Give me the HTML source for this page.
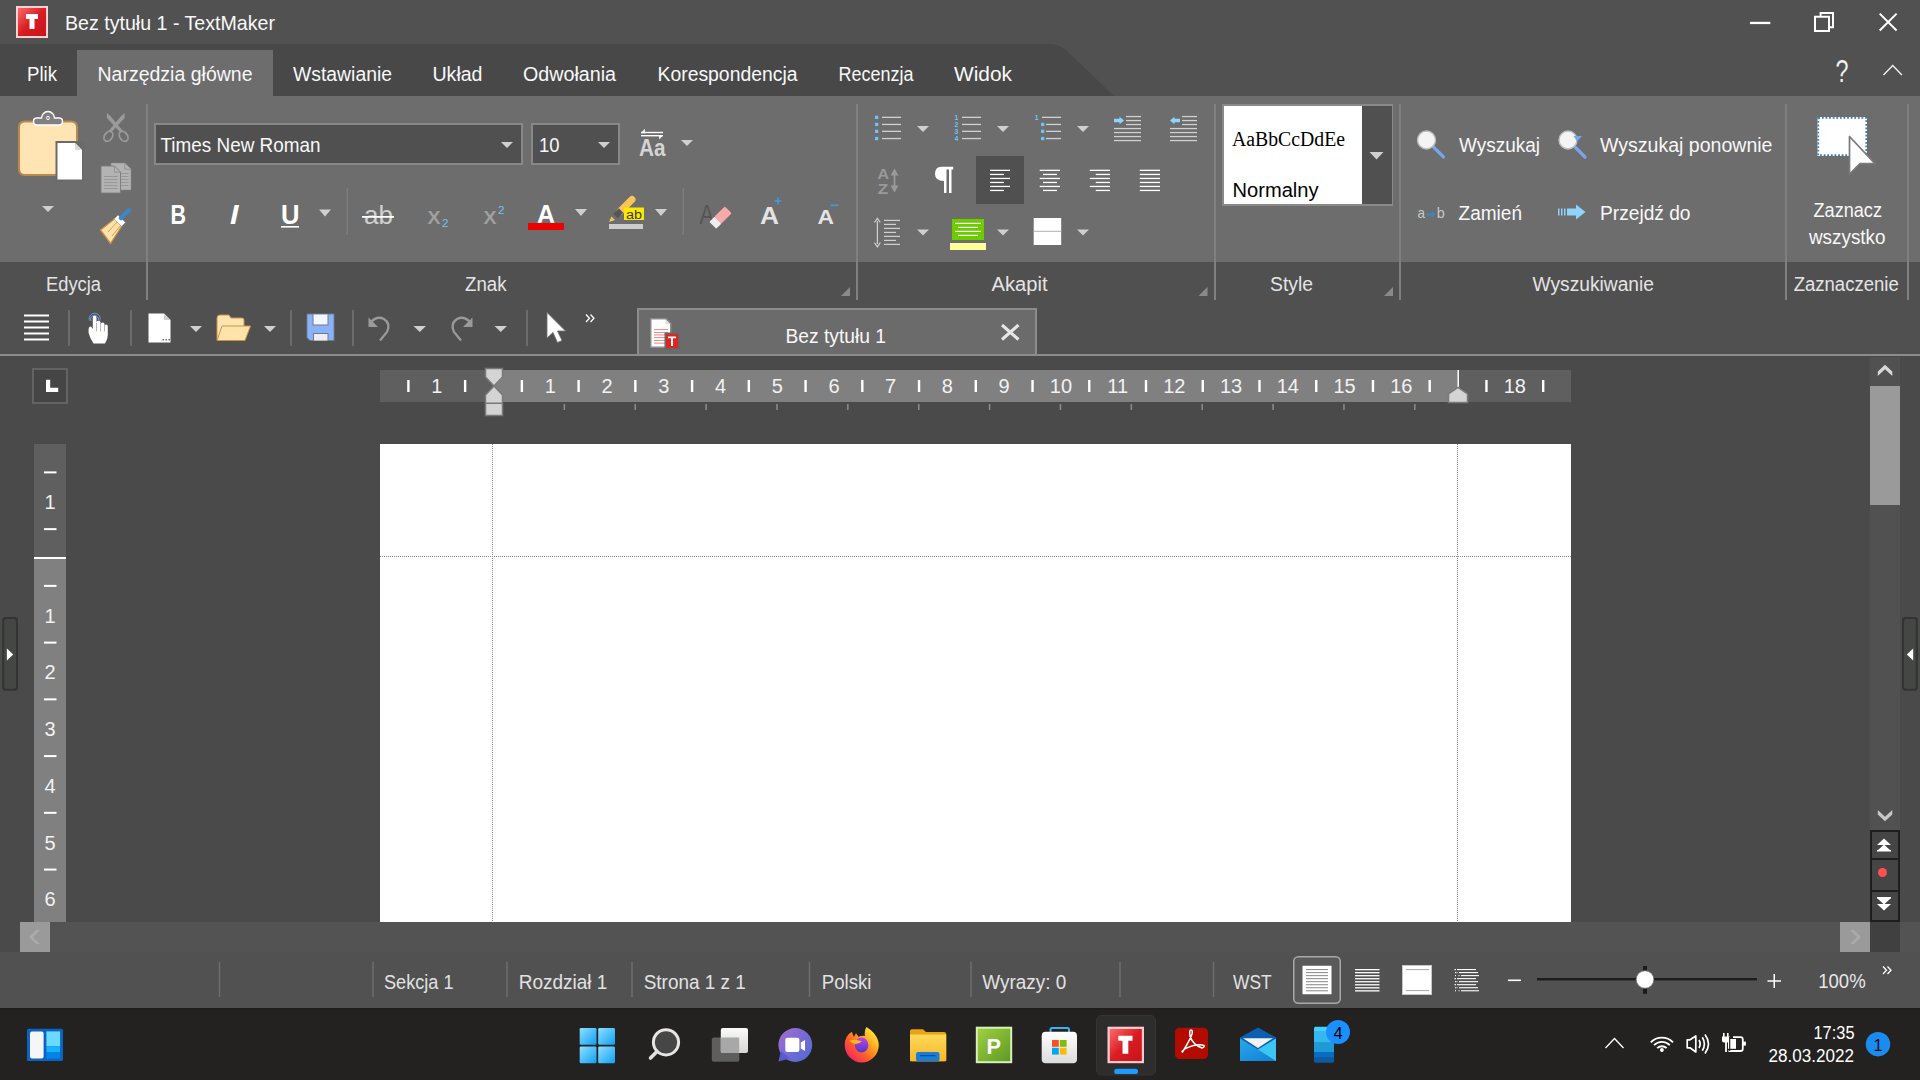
<!DOCTYPE html>
<html><head><meta charset="utf-8"><style>html,body{margin:0;padding:0;width:1920px;height:1080px;overflow:hidden;background:#4a4a4a}svg{display:block}</style></head><body><svg width="1920" height="1080" viewBox="0 0 1920 1080"><rect x="0" y="0" width="1920" height="44" fill="#515151" />
<rect x="0" y="44" width="1920" height="52" fill="#515151" />
<path d="M0 44H1050Q1060 44 1068 52L1114 96H0Z" fill="#484848" stroke="none" stroke-width="1" />
<rect x="77" y="50" width="196" height="46" fill="#6d6d6d" />
<rect x="0" y="96" width="1920" height="166" fill="#6d6d6d" />
<rect x="0" y="262" width="1920" height="93" fill="#505050" />
<rect x="0" y="356" width="1920" height="566" fill="#4a4a4a" />
<rect x="0" y="922" width="1920" height="30" fill="#535353" />
<rect x="0" y="952" width="1920" height="56" fill="#515151" />
<rect x="0" y="1008" width="1920" height="72" fill="#232220" />
<defs><linearGradient id="lg" x1="0" y1="0" x2="1" y2="1"><stop offset="0" stop-color="#ff6a6a"/><stop offset="0.5" stop-color="#d81c22"/><stop offset="1" stop-color="#c8141a"/></linearGradient></defs>
<rect x="16" y="6" width="32" height="32" fill="#ffd2d2" />
<rect x="18" y="8" width="28" height="28" fill="url(#lg)" />
<path d="M26 14H38V19H34.5V29H29.5V19H26Z" fill="#ffffff" stroke="none" stroke-width="1" />
<text x="65" y="30" font-size="21" fill="#f8f8f8" font-family='"Liberation Sans", sans-serif' font-weight="normal" font-style="normal" text-anchor="start" textLength="210" lengthAdjust="spacingAndGlyphs">Bez tytułu 1 - TextMaker</text>
<rect x="1750" y="21.8" width="20.3" height="2.3" fill="#ffffff" />
<path d="M1815 16.8H1829V30.9H1815Z" fill="none" stroke="#ffffff" stroke-width="2" />
<path d="M1820.6 16.8V12.9H1833V27.2H1829" fill="none" stroke="#ffffff" stroke-width="2" />
<path d="M1879.7 13.6L1896.6 30.5M1896.6 13.6L1879.7 30.5" fill="none" stroke="#ffffff" stroke-width="2" />
<text x="27" y="81" font-size="20" fill="#f8f8f8" font-family='"Liberation Sans", sans-serif' font-weight="normal" font-style="normal" text-anchor="start" textLength="30" lengthAdjust="spacingAndGlyphs">Plik</text>
<text x="97.5" y="81" font-size="20" fill="#f8f8f8" font-family='"Liberation Sans", sans-serif' font-weight="normal" font-style="normal" text-anchor="start" textLength="155" lengthAdjust="spacingAndGlyphs">Narzędzia główne</text>
<text x="293" y="81" font-size="20" fill="#f8f8f8" font-family='"Liberation Sans", sans-serif' font-weight="normal" font-style="normal" text-anchor="start" textLength="99" lengthAdjust="spacingAndGlyphs">Wstawianie</text>
<text x="432.5" y="81" font-size="20" fill="#f8f8f8" font-family='"Liberation Sans", sans-serif' font-weight="normal" font-style="normal" text-anchor="start" textLength="50" lengthAdjust="spacingAndGlyphs">Układ</text>
<text x="523" y="81" font-size="20" fill="#f8f8f8" font-family='"Liberation Sans", sans-serif' font-weight="normal" font-style="normal" text-anchor="start" textLength="93" lengthAdjust="spacingAndGlyphs">Odwołania</text>
<text x="657.5" y="81" font-size="20" fill="#f8f8f8" font-family='"Liberation Sans", sans-serif' font-weight="normal" font-style="normal" text-anchor="start" textLength="140" lengthAdjust="spacingAndGlyphs">Korespondencja</text>
<text x="838.5" y="81" font-size="20" fill="#f8f8f8" font-family='"Liberation Sans", sans-serif' font-weight="normal" font-style="normal" text-anchor="start" textLength="75" lengthAdjust="spacingAndGlyphs">Recenzja</text>
<text x="954" y="81" font-size="20" fill="#f8f8f8" font-family='"Liberation Sans", sans-serif' font-weight="normal" font-style="normal" text-anchor="start" textLength="58" lengthAdjust="spacingAndGlyphs">Widok</text>
<text x="1835.5" y="82" font-size="31" fill="#f0f0f0" font-family='"Liberation Sans", sans-serif' font-weight="normal" font-style="normal" text-anchor="start" textLength="13" lengthAdjust="spacingAndGlyphs">?</text>
<path d="M1883.5 75L1892.7 65.5L1901.9 75" fill="none" stroke="#f0f0f0" stroke-width="1.4" />
<rect x="146" y="104" width="2" height="196" fill="#808080" />
<rect x="856" y="104" width="2" height="196" fill="#808080" />
<rect x="1214" y="104" width="2" height="196" fill="#808080" />
<rect x="1399" y="104" width="2" height="196" fill="#808080" />
<rect x="1785" y="104" width="2" height="196" fill="#808080" />
<rect x="1907" y="104" width="2" height="196" fill="#808080" />
<text x="46" y="290.5" font-size="20" fill="#e4e4e4" font-family='"Liberation Sans", sans-serif' font-weight="normal" font-style="normal" text-anchor="start" textLength="55" lengthAdjust="spacingAndGlyphs">Edycja</text>
<text x="465" y="290.5" font-size="20" fill="#e4e4e4" font-family='"Liberation Sans", sans-serif' font-weight="normal" font-style="normal" text-anchor="start" textLength="41.5" lengthAdjust="spacingAndGlyphs">Znak</text>
<text x="991.5" y="290.5" font-size="20" fill="#e4e4e4" font-family='"Liberation Sans", sans-serif' font-weight="normal" font-style="normal" text-anchor="start" textLength="56" lengthAdjust="spacingAndGlyphs">Akapit</text>
<text x="1270" y="290.5" font-size="20" fill="#e4e4e4" font-family='"Liberation Sans", sans-serif' font-weight="normal" font-style="normal" text-anchor="start" textLength="43" lengthAdjust="spacingAndGlyphs">Style</text>
<text x="1532.5" y="290.5" font-size="20" fill="#e4e4e4" font-family='"Liberation Sans", sans-serif' font-weight="normal" font-style="normal" text-anchor="start" textLength="121.5" lengthAdjust="spacingAndGlyphs">Wyszukiwanie</text>
<text x="1793.7" y="290.5" font-size="20" fill="#e4e4e4" font-family='"Liberation Sans", sans-serif' font-weight="normal" font-style="normal" text-anchor="start" textLength="105" lengthAdjust="spacingAndGlyphs">Zaznaczenie</text>
<path d="M841 296H850V287Z" fill="#8a8a8a" stroke="none" stroke-width="1" />
<path d="M1198.5 296H1207.5V287Z" fill="#8a8a8a" stroke="none" stroke-width="1" />
<path d="M1384 296H1393V287Z" fill="#8a8a8a" stroke="none" stroke-width="1" />
<path d="M25 121.5H71Q77 121.5 77 127.5V169Q77 175 71 175H25Q19 175 19 169V127.5Q19 121.5 25 121.5Z" fill="#ffe5b3" stroke="#c0874a" stroke-width="2" />
<path d="M37 118H41.5A6.5 6.5 0 0 1 54.5 118H59Q62.5 118 62.5 121.5Q62.5 125 59 125H37Q33.5 125 33.5 121.5Q33.5 118 37 118Z" fill="#808080" stroke="#ffffff" stroke-width="1.4" />
<ellipse cx="48" cy="118" rx="1.4" ry="1.7" fill="none" stroke="#ffffff" stroke-width="0.9"/>
<rect x="55.5" y="141" width="28.5" height="40.5" fill="#6a6a6a" />
<path d="M57.5 143H75L82 150V179.5H57.5Z" fill="#ffffff" stroke="none" stroke-width="1" />
<path d="M75 143V150H82Z" fill="#d8d8d8" stroke="none" stroke-width="1" />
<path d="M42 206H54L48.0 212Z" fill="#cfcfcf"/>
<path d="M106.9 112.9L110.6 116.3L122.8 130.8L120.4 132.6L106.9 118Z" fill="#9a9a9a" stroke="none" stroke-width="1" />
<path d="M124.6 112.9V118L111.1 132.6L108.7 130.8L121 116.3Z" fill="#9a9a9a" stroke="none" stroke-width="1" />
<ellipse cx="108.4" cy="136.3" rx="3.8" ry="5.4" fill="none" stroke="#9a9a9a" stroke-width="1.8" transform="rotate(35 108.4 136.3)"/>
<ellipse cx="123.6" cy="136.3" rx="3.8" ry="5.4" fill="none" stroke="#9a9a9a" stroke-width="1.8" transform="rotate(-35 123.6 136.3)"/>
<path d="M111 163H125L131 169V190H111Z" fill="#b3b3b3" stroke="#8a8a8a" stroke-width="0.6" />
<path d="M124.8 163.3V169.2H130.7" fill="none" stroke="#8a8a8a" stroke-width="0.8" />
<path d="M101 166H114.5L120.5 172V193H101Z" fill="#b3b3b3" stroke="#7a7a7a" stroke-width="0.9" />
<path d="M114.5 166.3V172.2H120.2" fill="none" stroke="#8a8a8a" stroke-width="0.8" />
<rect x="104" y="176.0" width="13.5" height="1" fill="#979797" />
<rect x="104" y="179.0" width="13.5" height="1" fill="#979797" />
<rect x="104" y="182.0" width="13.5" height="1" fill="#979797" />
<rect x="104" y="185.0" width="13.5" height="1" fill="#979797" />
<rect x="104" y="188.0" width="13.5" height="1" fill="#979797" />
<rect x="121" y="173.0" width="7.5" height="1" fill="#979797" />
<rect x="121" y="176.0" width="7.5" height="1" fill="#979797" />
<rect x="121" y="179.0" width="7.5" height="1" fill="#979797" />
<rect x="121" y="182.0" width="7.5" height="1" fill="#979797" />
<rect x="121" y="185.0" width="7.5" height="1" fill="#979797" />
<path d="M100.5 230L115.5 218L122.5 225L110.5 243.5Z" fill="#ffe2a8" stroke="#c88b4a" stroke-width="1.3" />
<path d="M108 232L118 221M112 236L121 225" fill="none" stroke="#c88b4a" stroke-width="0.8" />
<path d="M114 219L118 215L125.5 222.5L121.5 226.5Z" fill="#ffffff" stroke="#8a8a8a" stroke-width="0.6" />
<path d="M121 218L129 210" fill="none" stroke="#3f84c4" stroke-width="4.5" stroke-linecap="round"/>
<rect x="154" y="123" width="369" height="42" fill="#888888" />
<rect x="156" y="125" width="365" height="38" fill="#505050" />
<text x="160.5" y="152.2" font-size="21" fill="#f8f8f8" font-family='"Liberation Sans", sans-serif' font-weight="normal" font-style="normal" text-anchor="start" textLength="160" lengthAdjust="spacingAndGlyphs">Times New Roman</text>
<path d="M501 142H513L507.0 148Z" fill="#cfcfcf"/>
<rect x="531" y="123" width="89" height="42" fill="#888888" />
<rect x="533" y="125" width="85" height="38" fill="#505050" />
<text x="539" y="152" font-size="21" fill="#f8f8f8" font-family='"Liberation Sans", sans-serif' font-weight="normal" font-style="normal" text-anchor="start" textLength="20.5" lengthAdjust="spacingAndGlyphs">10</text>
<path d="M598 142H610L604.0 148Z" fill="#cfcfcf"/>
<rect x="641" y="131.8" width="22" height="1.4" fill="#ffffff" />
<path d="M640.8 133.2L644.8 128.7V133.2Z" fill="#ffffff" stroke="none" stroke-width="1" />
<rect x="641" y="135" width="22" height="1.4" fill="#ffffff" />
<path d="M663.2 135L659.2 139.5V135Z" fill="#ffffff" stroke="none" stroke-width="1" />
<text x="639" y="155.8" font-size="24" fill="#d4d4d4" font-family='"Liberation Sans", sans-serif' font-weight="bold" font-style="normal" text-anchor="start" textLength="26.5" lengthAdjust="spacingAndGlyphs">Aa</text>
<path d="M681 140H693L687.0 146Z" fill="#cfcfcf"/>
<text x="170.5" y="224.4" font-size="28" fill="#ffffff" font-family='"Liberation Sans", sans-serif' font-weight="bold" font-style="normal" text-anchor="start" textLength="15.5" lengthAdjust="spacingAndGlyphs">B</text>
<text x="230" y="224.4" font-size="28" fill="#ffffff" font-family='"Liberation Sans", sans-serif' font-weight="bold" font-style="italic" text-anchor="start" textLength="8.5" lengthAdjust="spacingAndGlyphs">I</text>
<text x="281" y="224.4" font-size="27" fill="#ffffff" font-family='"Liberation Sans", sans-serif' font-weight="bold" font-style="normal" text-anchor="start" textLength="18.5" lengthAdjust="spacingAndGlyphs">U</text>
<rect x="281" y="226" width="18" height="1.6" fill="#ffffff" />
<path d="M319 209.5H331L325.0 216.5Z" fill="#cfcfcf"/>
<rect x="346.5" y="188" width="1.5" height="47" fill="#7c7c7c" />
<text x="364" y="224.4" font-size="26" fill="#d0d0d0" font-family='"Liberation Sans", sans-serif' font-weight="normal" font-style="normal" text-anchor="start" textLength="29" lengthAdjust="spacingAndGlyphs">ab</text>
<rect x="362" y="216" width="32" height="1.8" fill="#ffffff" />
<text x="427.5" y="224" font-size="19" fill="#a0a0a0" font-family='"Liberation Sans", sans-serif' font-weight="bold" font-style="normal" text-anchor="start" textLength="13" lengthAdjust="spacingAndGlyphs">X</text>
<text x="442" y="227" font-size="10" fill="#6ec3f5" font-family='"Liberation Sans", sans-serif' font-weight="normal" font-style="normal" text-anchor="start" textLength="6.5" lengthAdjust="spacingAndGlyphs">2</text>
<text x="483.5" y="224" font-size="19" fill="#a0a0a0" font-family='"Liberation Sans", sans-serif' font-weight="bold" font-style="normal" text-anchor="start" textLength="13" lengthAdjust="spacingAndGlyphs">X</text>
<text x="498" y="214" font-size="10" fill="#6ec3f5" font-family='"Liberation Sans", sans-serif' font-weight="normal" font-style="normal" text-anchor="start" textLength="6.5" lengthAdjust="spacingAndGlyphs">2</text>
<text x="537" y="223" font-size="25" fill="#ffffff" font-family='"Liberation Sans", sans-serif' font-weight="bold" font-style="normal" text-anchor="start" textLength="18" lengthAdjust="spacingAndGlyphs">A</text>
<rect x="528" y="223" width="36" height="7" fill="#ee0000" />
<path d="M575 209H587L581.0 216Z" fill="#cfcfcf"/>
<path d="M620 211.5L632 199.5" fill="none" stroke="#f8c55a" stroke-width="7" stroke-linecap="round"/>
<path d="M621 210.5L615.5 216" fill="none" stroke="#555555" stroke-width="6.2" />
<path d="M609 222L611.5 216.5L615 220Z" fill="#f8c55a" stroke="none" stroke-width="1" />
<rect x="624" y="207.5" width="20" height="12.5" fill="#ffe800" />
<text x="626" y="218.5" font-size="12.5" fill="#3a3a3a" font-family='"Liberation Sans", sans-serif' font-weight="normal" font-style="normal" text-anchor="start" textLength="16" lengthAdjust="spacingAndGlyphs">ab</text>
<rect x="609" y="224" width="34" height="5" fill="#cccccc" />
<path d="M655 209H667L661.0 216Z" fill="#cfcfcf"/>
<rect x="682.5" y="188" width="1.5" height="47" fill="#7c7c7c" />
<text x="699.5" y="224" font-size="27" fill="#555555" font-family='"Liberation Sans", sans-serif' font-weight="normal" font-style="normal" text-anchor="start" textLength="14.5" lengthAdjust="spacingAndGlyphs">A</text>
<g transform="rotate(-45 720.6 217.5)"><rect x="709.5" y="212.6" width="7.5" height="9.8" rx="1" fill="#eeeeee"/><rect x="716.5" y="212.6" width="15" height="9.8" rx="1.5" fill="#f7aaaa"/></g>
<text x="760" y="223.5" font-size="24" fill="#e4e4e4" font-family='"Liberation Sans", sans-serif' font-weight="bold" font-style="normal" text-anchor="start" textLength="19" lengthAdjust="spacingAndGlyphs">A</text>
<path d="M778 197.5V204.5M774.5 201H781.5" fill="none" stroke="#3f9be0" stroke-width="1.6" />
<text x="817.5" y="223.5" font-size="21" fill="#e4e4e4" font-family='"Liberation Sans", sans-serif' font-weight="bold" font-style="normal" text-anchor="start" textLength="16.5" lengthAdjust="spacingAndGlyphs">A</text>
<rect x="830.5" y="204.5" width="8" height="1.6" fill="#3f9be0" />
<rect x="875" y="115.7" width="3.3" height="3.3" fill="#6ec3f5" />
<rect x="882" y="116.7" width="19" height="1.3" fill="#d0d0d0" />
<rect x="875" y="122.80000000000001" width="3.3" height="3.3" fill="#6ec3f5" />
<rect x="882" y="123.80000000000001" width="19" height="1.3" fill="#d0d0d0" />
<rect x="875" y="129.70000000000002" width="3.3" height="3.3" fill="#6ec3f5" />
<rect x="882" y="130.70000000000002" width="19" height="1.3" fill="#d0d0d0" />
<rect x="875" y="136.9" width="3.3" height="3.3" fill="#6ec3f5" />
<rect x="882" y="137.9" width="19" height="1.3" fill="#d0d0d0" />
<path d="M917 126H929L923.0 132Z" fill="#cfcfcf"/>
<text x="956.4" y="120.0" font-size="7.5" fill="#6ec3f5" font-family='"Liberation Sans", sans-serif' font-weight="bold" font-style="normal" text-anchor="middle" textLength="3.8" lengthAdjust="spacingAndGlyphs">1</text>
<rect x="962" y="116.7" width="19" height="1.3" fill="#d0d0d0" />
<text x="956.4" y="127.10000000000001" font-size="7.5" fill="#6ec3f5" font-family='"Liberation Sans", sans-serif' font-weight="bold" font-style="normal" text-anchor="middle" textLength="3.8" lengthAdjust="spacingAndGlyphs">2</text>
<rect x="962" y="123.80000000000001" width="19" height="1.3" fill="#d0d0d0" />
<text x="956.4" y="134.0" font-size="7.5" fill="#6ec3f5" font-family='"Liberation Sans", sans-serif' font-weight="bold" font-style="normal" text-anchor="middle" textLength="3.8" lengthAdjust="spacingAndGlyphs">3</text>
<rect x="962" y="130.70000000000002" width="19" height="1.3" fill="#d0d0d0" />
<text x="956.4" y="141.2" font-size="7.5" fill="#6ec3f5" font-family='"Liberation Sans", sans-serif' font-weight="bold" font-style="normal" text-anchor="middle" textLength="3.8" lengthAdjust="spacingAndGlyphs">4</text>
<rect x="962" y="137.9" width="19" height="1.3" fill="#d0d0d0" />
<path d="M997 126H1009L1003.0 132Z" fill="#cfcfcf"/>
<text x="1036.6" y="120.0" font-size="7.5" fill="#6ec3f5" font-family='"Liberation Sans", sans-serif' font-weight="bold" font-style="normal" text-anchor="middle" textLength="3.8" lengthAdjust="spacingAndGlyphs">1</text>
<rect x="1042" y="116.7" width="19" height="1.3" fill="#d0d0d0" />
<rect x="1041" y="122.80000000000001" width="3.3" height="3.3" fill="#6ec3f5" />
<rect x="1046" y="123.80000000000001" width="15" height="1.3" fill="#d0d0d0" />
<rect x="1041" y="129.70000000000002" width="3.3" height="3.3" fill="#6ec3f5" />
<rect x="1046" y="130.70000000000002" width="15" height="1.3" fill="#d0d0d0" />
<rect x="1041" y="136.9" width="3.3" height="3.3" fill="#6ec3f5" />
<rect x="1046" y="137.9" width="15" height="1.3" fill="#d0d0d0" />
<path d="M1077 126H1089L1083.0 132Z" fill="#cfcfcf"/>
<rect x="1126" y="115.9" width="15" height="1.3" fill="#d0d0d0" />
<rect x="1182" y="115.9" width="15" height="1.3" fill="#d0d0d0" />
<rect x="1126" y="119.9" width="15" height="1.3" fill="#d0d0d0" />
<rect x="1182" y="119.9" width="15" height="1.3" fill="#d0d0d0" />
<rect x="1126" y="123.9" width="15" height="1.3" fill="#d0d0d0" />
<rect x="1182" y="123.9" width="15" height="1.3" fill="#d0d0d0" />
<rect x="1114" y="127.9" width="27" height="1.3" fill="#d0d0d0" />
<rect x="1170" y="127.9" width="27" height="1.3" fill="#d0d0d0" />
<rect x="1114" y="131.9" width="27" height="1.3" fill="#d0d0d0" />
<rect x="1170" y="131.9" width="27" height="1.3" fill="#d0d0d0" />
<rect x="1114" y="135.9" width="27" height="1.3" fill="#d0d0d0" />
<rect x="1170" y="135.9" width="27" height="1.3" fill="#d0d0d0" />
<rect x="1114" y="139.9" width="27" height="1.3" fill="#d0d0d0" />
<rect x="1170" y="139.9" width="27" height="1.3" fill="#d0d0d0" />
<path d="M1114 118.8H1119.5V116.8L1124 120.5L1119.5 124.2V122.2H1114Z" fill="#8ed4ff" stroke="none" stroke-width="1" />
<path d="M1180 118.8H1174.5V116.8L1170 120.5L1174.5 124.2V122.2H1180Z" fill="#8ed4ff" stroke="none" stroke-width="1" />
<text x="877.5" y="178.6" font-size="15" fill="#9a9a9a" font-family='"Liberation Sans", sans-serif' font-weight="bold" font-style="normal" text-anchor="start" textLength="11.5" lengthAdjust="spacingAndGlyphs">A</text>
<text x="877.8" y="193.7" font-size="14.5" fill="#9a9a9a" font-family='"Liberation Sans", sans-serif' font-weight="bold" font-style="normal" text-anchor="start" textLength="10.5" lengthAdjust="spacingAndGlyphs">Z</text>
<rect x="893.6" y="173" width="1.8" height="15" fill="#9a9a9a" />
<path d="M890.5 175.5L894.5 168.5L898.5 175.5Z" fill="#9a9a9a" stroke="none" stroke-width="1" />
<path d="M890.5 185.5L894.5 192.5L898.5 185.5Z" fill="#9a9a9a" stroke="none" stroke-width="1" />
<path d="M941.5 166.7H953.2V169.5H951.5V192.9H949V169.5H946.5V192.9H944V181Q935 181 935 174Q935 166.7 941.5 166.7Z" fill="#ffffff" stroke="none" stroke-width="1" />
<rect x="976" y="156" width="48" height="48" fill="#505050" />
<rect x="990" y="169.70000000000002" width="20" height="1.3" fill="#ffffff" />
<rect x="1039.7" y="169.70000000000002" width="20.3" height="1.3" fill="#ffffff" />
<rect x="1089.8" y="169.70000000000002" width="20.2" height="1.3" fill="#ffffff" />
<rect x="1139.8" y="169.70000000000002" width="20.2" height="1.3" fill="#ffffff" />
<rect x="990" y="173.8" width="14" height="1.3" fill="#ffffff" />
<rect x="1043" y="173.8" width="14" height="1.3" fill="#ffffff" />
<rect x="1095.8" y="173.8" width="14.2" height="1.3" fill="#ffffff" />
<rect x="1139.8" y="173.8" width="20.2" height="1.3" fill="#ffffff" />
<rect x="990" y="177.8" width="20" height="1.3" fill="#ffffff" />
<rect x="1039.7" y="177.8" width="20.3" height="1.3" fill="#ffffff" />
<rect x="1089.8" y="177.8" width="20.2" height="1.3" fill="#ffffff" />
<rect x="1139.8" y="177.8" width="20.2" height="1.3" fill="#ffffff" />
<rect x="990" y="181.8" width="14" height="1.3" fill="#ffffff" />
<rect x="1043" y="181.8" width="14" height="1.3" fill="#ffffff" />
<rect x="1095.8" y="181.8" width="14.2" height="1.3" fill="#ffffff" />
<rect x="1139.8" y="181.8" width="20.2" height="1.3" fill="#ffffff" />
<rect x="990" y="185.8" width="20" height="1.3" fill="#ffffff" />
<rect x="1039.7" y="185.8" width="20.3" height="1.3" fill="#ffffff" />
<rect x="1089.8" y="185.8" width="20.2" height="1.3" fill="#ffffff" />
<rect x="1139.8" y="185.8" width="20.2" height="1.3" fill="#ffffff" />
<rect x="990" y="189.8" width="14" height="1.3" fill="#ffffff" />
<rect x="1043" y="189.8" width="14" height="1.3" fill="#ffffff" />
<rect x="1095.8" y="189.8" width="14.2" height="1.3" fill="#ffffff" />
<rect x="1139.8" y="189.8" width="20.2" height="1.3" fill="#ffffff" />
<rect x="876.8" y="221" width="1.2" height="23" fill="#d0d0d0" />
<path d="M874.5 222.5L877.4 218.3L880.3 222.5M874.5 242.7L877.4 246.9L880.3 242.7" fill="none" stroke="#d0d0d0" stroke-width="1.2" />
<rect x="884" y="219.8" width="16" height="1.2" fill="#d0d0d0" />
<rect x="884" y="223.8" width="12" height="1.2" fill="#d0d0d0" />
<rect x="884" y="227.8" width="16" height="1.2" fill="#d0d0d0" />
<rect x="884" y="231.8" width="12" height="1.2" fill="#d0d0d0" />
<rect x="884" y="235.8" width="16" height="1.2" fill="#d0d0d0" />
<rect x="884" y="239.8" width="12" height="1.2" fill="#d0d0d0" />
<rect x="884" y="243.8" width="16" height="1.2" fill="#d0d0d0" />
<path d="M917 229.5H929L923.0 235.5Z" fill="#cfcfcf"/>
<rect x="952" y="219" width="32" height="21" fill="#6ccc00" />
<rect x="955" y="222.8" width="26" height="1.2" fill="#ffffff" />
<rect x="958" y="226.8" width="20" height="1.2" fill="#ffffff" />
<rect x="955" y="230.8" width="26" height="1.2" fill="#ffffff" />
<rect x="958" y="234.8" width="20" height="1.2" fill="#ffffff" />
<rect x="950" y="243" width="36" height="7" fill="#ffff99" />
<path d="M997 229.5H1009L1003.0 235.5Z" fill="#cfcfcf"/>
<rect x="1033.7" y="218" width="27.5" height="27" fill="#ffffff" />
<rect x="1033.7" y="230.8" width="27.5" height="1" fill="#b0b0b0" />
<path d="M1077 229.5H1089L1083.0 235.5Z" fill="#cfcfcf"/>
<rect x="1222" y="104" width="171" height="102" fill="#8a8a8a" />
<rect x="1224" y="106" width="168" height="98" fill="#505050" />
<rect x="1224" y="106" width="138" height="98" fill="#ffffff" />
<text x="1232" y="146" font-size="20" fill="#000000" font-family='"Liberation Serif", serif' font-weight="normal" font-style="normal" text-anchor="start" textLength="113" lengthAdjust="spacingAndGlyphs">AaBbCcDdEe</text>
<text x="1232.5" y="197" font-size="20" fill="#000000" font-family='"Liberation Sans", sans-serif' font-weight="normal" font-style="normal" text-anchor="start" textLength="86" lengthAdjust="spacingAndGlyphs">Normalny</text>
<path d="M1369.5 152H1383.5L1376.5 159.5Z" fill="#cfcfcf"/>
<path d="M1433.0 146.5L1443.5 157" fill="none" stroke="#7aa4e8" stroke-width="3.2" stroke-linecap="round"/>
<circle cx="1426.5" cy="140" r="9" fill="#f4f4f4" stroke="#bdbdbd" stroke-width="1.4"/>
<text x="1459" y="152" font-size="20.5" fill="#f8f8f8" font-family='"Liberation Sans", sans-serif' font-weight="normal" font-style="normal" text-anchor="start" textLength="81" lengthAdjust="spacingAndGlyphs">Wyszukaj</text>
<path d="M1574.5 146.5L1585 157" fill="none" stroke="#7aa4e8" stroke-width="3.2" stroke-linecap="round"/>
<circle cx="1568" cy="140" r="9" fill="#f4f4f4" stroke="#bdbdbd" stroke-width="1.4"/>
<path d="M1573.5 136H1582L1577 141.5Z" fill="#7aa4f0" stroke="none" stroke-width="1" />
<text x="1600" y="152" font-size="20.5" fill="#f8f8f8" font-family='"Liberation Sans", sans-serif' font-weight="normal" font-style="normal" text-anchor="start" textLength="172.5" lengthAdjust="spacingAndGlyphs">Wyszukaj ponownie</text>
<text x="1417.5" y="218" font-size="14.5" fill="#c8c8c8" font-family='"Liberation Sans", sans-serif' font-weight="normal" font-style="normal" text-anchor="start" textLength="7.5" lengthAdjust="spacingAndGlyphs">a</text>
<text x="1436.8" y="218" font-size="14.5" fill="#c8c8c8" font-family='"Liberation Sans", sans-serif' font-weight="normal" font-style="normal" text-anchor="start" textLength="8" lengthAdjust="spacingAndGlyphs">b</text>
<path d="M1426 214.5H1432" fill="none" stroke="#3a88c0" stroke-width="2" />
<path d="M1431.5 211L1435.5 214.5L1431.5 218Z" fill="#3a88c0" stroke="none" stroke-width="1" />
<text x="1458.5" y="219.5" font-size="20.5" fill="#f8f8f8" font-family='"Liberation Sans", sans-serif' font-weight="normal" font-style="normal" text-anchor="start" textLength="63.5" lengthAdjust="spacingAndGlyphs">Zamień</text>
<rect x="1558" y="208.5" width="1.5" height="7" fill="#8ed4ff" />
<rect x="1561" y="208.5" width="1.5" height="7" fill="#8ed4ff" />
<rect x="1564" y="208.5" width="1.5" height="7" fill="#8ed4ff" />
<path d="M1567 208.5H1576V204.5L1585.5 212L1576 219.5V215.5H1567Z" fill="#8ed4ff" stroke="none" stroke-width="1" />
<text x="1600" y="219.5" font-size="20.5" fill="#f8f8f8" font-family='"Liberation Sans", sans-serif' font-weight="normal" font-style="normal" text-anchor="start" textLength="90.5" lengthAdjust="spacingAndGlyphs">Przejdź do</text>
<rect x="1817.5" y="117" width="49.5" height="39" fill="#ffffff" />
<rect x="1818.3" y="117.8" width="47.9" height="37.4" fill="none" stroke="#3a7cc0" stroke-width="1.7" stroke-dasharray="1.8 1.8"/>
<path d="M1849.5 136.5V174L1860 163.7H1875Z" fill="#ffffff" stroke="#7a7a7a" stroke-width="1.7" stroke-linejoin="round"/>
<text x="1813.5" y="216.7" font-size="20.5" fill="#f8f8f8" font-family='"Liberation Sans", sans-serif' font-weight="normal" font-style="normal" text-anchor="start" textLength="68.5" lengthAdjust="spacingAndGlyphs">Zaznacz</text>
<text x="1809" y="244" font-size="20.5" fill="#f8f8f8" font-family='"Liberation Sans", sans-serif' font-weight="normal" font-style="normal" text-anchor="start" textLength="76.5" lengthAdjust="spacingAndGlyphs">wszystko</text>
<rect x="24" y="314.5" width="25" height="2" fill="#ffffff" />
<rect x="24" y="320.5" width="25" height="2" fill="#ffffff" />
<rect x="24" y="326.5" width="25" height="2" fill="#ffffff" />
<rect x="24" y="332.5" width="25" height="2" fill="#ffffff" />
<rect x="24" y="338.5" width="25" height="2" fill="#ffffff" />
<rect x="68.25" y="310" width="1.5" height="36" fill="#747474" />
<rect x="130.25" y="310" width="1.5" height="36" fill="#747474" />
<rect x="290.25" y="310" width="1.5" height="36" fill="#747474" />
<rect x="352.25" y="310" width="1.5" height="36" fill="#747474" />
<rect x="526.25" y="310" width="1.5" height="36" fill="#747474" />
<path d="M88.6 329Q89.5 325.8 91.2 326.8L92.8 329V318Q92.8 315.6 94.6 315.6Q96.5 315.6 96.5 318V331.5V322.8Q96.5 320.8 98.5 320.8Q100.6 320.8 100.6 322.8V331.5V324.5Q100.6 322.6 102.6 322.6Q104.6 322.6 104.6 324.5V331.5V326.5Q104.6 324.5 106.2 324.5Q107.8 324.5 107.8 326.5V335Q107.8 339.5 105 343.4H93.5Q90 338.5 88.6 333Z" fill="#ffffff" stroke="none" stroke-width="1" />
<rect x="96.25" y="323" width="0.7" height="8.5" fill="#9a9a9a" />
<rect x="100.35000000000001" y="323" width="0.7" height="8.5" fill="#9a9a9a" />
<rect x="104.3" y="325" width="0.7" height="6.5" fill="#9a9a9a" />
<path d="M89.3 320.5A5.6 5.6 0 1 1 99.8 321" fill="none" stroke="#6a9af0" stroke-width="0.9" />
<path d="M91 321A3.9 3.9 0 1 1 98.2 320.5" fill="none" stroke="#7aa8ff" stroke-width="0.9" />
<path d="M148.5 313.5H164L170.5 320V342.5H148.5Z" fill="#ffffff" stroke="none" stroke-width="1" />
<path d="M164 313.5V320H170.5Z" fill="#cfcfcf" stroke="none" stroke-width="1" />
<rect x="162.5" y="339" width="1.5" height="1.5" fill="#6a6a6a" />
<rect x="165.5" y="339" width="1.5" height="1.5" fill="#6a6a6a" />
<rect x="168.5" y="339" width="1.5" height="1.5" fill="#6a6a6a" />
<path d="M190 326H202L196.0 332Z" fill="#cfcfcf"/>
<path d="M217 318Q217 315 220 315H229L231 318H242Q244 318 244 320V340H217Z" fill="#ffe4b0" stroke="#c8934c" stroke-width="1" />
<path d="M217 340.5L222 326H250.5L245 340.5Z" fill="#ffe3a8" stroke="#c8934c" stroke-width="1" />
<path d="M264 326H276L270.0 332Z" fill="#cfcfcf"/>
<path d="M307 314H334V340.5H310L307 337.5Z" fill="#8ab2f8" stroke="#6e7a8a" stroke-width="0.9" />
<rect x="312.5" y="314.5" width="16" height="11" fill="#6e7a8a" />
<rect x="313.5" y="314.5" width="14" height="10" fill="#f2f6ff" />
<rect x="313" y="333" width="15.5" height="7.5" fill="#6e7a8a" />
<rect x="314" y="334" width="13.5" height="6.5" fill="#eeeeee" />
<path d="M371 322Q377 315.5 384 319Q391 323.5 387 332L380 340.5" fill="none" stroke="#9a9a9a" stroke-width="2.3" />
<path d="M368.5 317.5V327H378Z" fill="#9a9a9a" stroke="none" stroke-width="1" />
<path d="M413.5 326H426L419.75 332Z" fill="#cfcfcf"/>
<path d="M470 322Q464 315.5 457 319Q450 323.5 454 332L461 340.5" fill="none" stroke="#9a9a9a" stroke-width="2.3" />
<path d="M472.5 317.5V327H463Z" fill="#9a9a9a" stroke="none" stroke-width="1" />
<path d="M494.5 326H507L500.75 332Z" fill="#cfcfcf"/>
<path d="M547 312.5V338L553 332.5L557.5 342.5L562 340.5L557.5 331H565.5Z" fill="#ffffff" stroke="#707070" stroke-width="0.8" />
<path d="M586 314.5L589.5 318.3L586 322M590.5 314.5L594 318.3L590.5 322" fill="none" stroke="#ffffff" stroke-width="1.3" />
<rect x="637" y="308" width="400" height="46" fill="#8c8c8c" />
<rect x="639" y="310" width="396" height="44" fill="#6b6b6b" />
<rect x="0" y="354" width="1920" height="2" fill="#8c8c8c" />
<path d="M650 318H666.5L671.5 323V348H650Z" fill="#8a8a8a" stroke="none" stroke-width="1" />
<path d="M651.5 319.5H665.5L670 324V346.5H651.5Z" fill="#ffffff" stroke="none" stroke-width="1" />
<path d="M665.5 319.5V324H670Z" fill="#dddddd" stroke="none" stroke-width="1" />
<rect x="654" y="329.0" width="14" height="1.1" fill="#e89090" />
<rect x="654" y="331.9" width="14" height="1.1" fill="#e89090" />
<rect x="654" y="334.4" width="14" height="1.1" fill="#e89090" />
<rect x="654" y="337.0" width="14" height="1.1" fill="#e89090" />
<rect x="654" y="339.9" width="14" height="1.1" fill="#e89090" />
<rect x="654" y="342.6" width="14" height="1.1" fill="#e89090" />
<rect x="664.5" y="332.5" width="15" height="17" fill="#5d6b6b" />
<rect x="666" y="334" width="12.2" height="14.1" fill="#e02424" />
<path d="M668 336.5H676V338.3H673V346H671V338.3H668Z" fill="#ffffff" stroke="none" stroke-width="1" />
<text x="785.5" y="343.2" font-size="20.5" fill="#f8f8f8" font-family='"Liberation Sans", sans-serif' font-weight="normal" font-style="normal" text-anchor="start" textLength="100.5" lengthAdjust="spacingAndGlyphs">Bez tytułu 1</text>
<path d="M1002 325L1018.5 339.5M1018.5 325L1002 339.5" fill="none" stroke="#e6e6e6" stroke-width="3" />
<rect x="32" y="368" width="36" height="36" fill="#636363" />
<rect x="34" y="370" width="32" height="32" fill="#454545" />
<path d="M46 379.7H50.2V387.8H58.2V392H46Z" fill="#ffffff" stroke="none" stroke-width="1" />
<rect x="380" y="370" width="1191" height="32" fill="#5f5f5f" />
<rect x="493.5" y="370" width="964.5" height="32" fill="#808080" />
<rect x="407.19" y="380" width="2.4" height="12" fill="#ffffff" />
<rect x="463.93" y="380" width="2.4" height="12" fill="#ffffff" />
<rect x="520.67" y="380" width="2.4" height="12" fill="#ffffff" />
<rect x="577.41" y="380" width="2.4" height="12" fill="#ffffff" />
<rect x="634.15" y="380" width="2.4" height="12" fill="#ffffff" />
<rect x="690.89" y="380" width="2.4" height="12" fill="#ffffff" />
<rect x="747.63" y="380" width="2.4" height="12" fill="#ffffff" />
<rect x="804.3699999999999" y="380" width="2.4" height="12" fill="#ffffff" />
<rect x="861.1099999999999" y="380" width="2.4" height="12" fill="#ffffff" />
<rect x="917.8499999999999" y="380" width="2.4" height="12" fill="#ffffff" />
<rect x="974.5899999999999" y="380" width="2.4" height="12" fill="#ffffff" />
<rect x="1031.33" y="380" width="2.4" height="12" fill="#ffffff" />
<rect x="1088.07" y="380" width="2.4" height="12" fill="#ffffff" />
<rect x="1144.81" y="380" width="2.4" height="12" fill="#ffffff" />
<rect x="1201.55" y="380" width="2.4" height="12" fill="#ffffff" />
<rect x="1258.29" y="380" width="2.4" height="12" fill="#ffffff" />
<rect x="1315.03" y="380" width="2.4" height="12" fill="#ffffff" />
<rect x="1371.77" y="380" width="2.4" height="12" fill="#ffffff" />
<rect x="1428.51" y="380" width="2.4" height="12" fill="#ffffff" />
<rect x="1485.25" y="380" width="2.4" height="12" fill="#ffffff" />
<rect x="1541.99" y="380" width="2.4" height="12" fill="#ffffff" />
<text x="436.76" y="393" font-size="20" fill="#f2f2f2" font-family='"Liberation Sans", sans-serif' font-weight="normal" font-style="normal" text-anchor="middle">1</text>
<text x="550.24" y="393" font-size="20" fill="#f2f2f2" font-family='"Liberation Sans", sans-serif' font-weight="normal" font-style="normal" text-anchor="middle">1</text>
<text x="606.98" y="393" font-size="20" fill="#f2f2f2" font-family='"Liberation Sans", sans-serif' font-weight="normal" font-style="normal" text-anchor="middle">2</text>
<text x="663.72" y="393" font-size="20" fill="#f2f2f2" font-family='"Liberation Sans", sans-serif' font-weight="normal" font-style="normal" text-anchor="middle">3</text>
<text x="720.46" y="393" font-size="20" fill="#f2f2f2" font-family='"Liberation Sans", sans-serif' font-weight="normal" font-style="normal" text-anchor="middle">4</text>
<text x="777.2" y="393" font-size="20" fill="#f2f2f2" font-family='"Liberation Sans", sans-serif' font-weight="normal" font-style="normal" text-anchor="middle">5</text>
<text x="833.94" y="393" font-size="20" fill="#f2f2f2" font-family='"Liberation Sans", sans-serif' font-weight="normal" font-style="normal" text-anchor="middle">6</text>
<text x="890.6800000000001" y="393" font-size="20" fill="#f2f2f2" font-family='"Liberation Sans", sans-serif' font-weight="normal" font-style="normal" text-anchor="middle">7</text>
<text x="947.4200000000001" y="393" font-size="20" fill="#f2f2f2" font-family='"Liberation Sans", sans-serif' font-weight="normal" font-style="normal" text-anchor="middle">8</text>
<text x="1004.1600000000001" y="393" font-size="20" fill="#f2f2f2" font-family='"Liberation Sans", sans-serif' font-weight="normal" font-style="normal" text-anchor="middle">9</text>
<text x="1060.9" y="393" font-size="20" fill="#f2f2f2" font-family='"Liberation Sans", sans-serif' font-weight="normal" font-style="normal" text-anchor="middle">10</text>
<text x="1117.6399999999999" y="393" font-size="20" fill="#f2f2f2" font-family='"Liberation Sans", sans-serif' font-weight="normal" font-style="normal" text-anchor="middle">11</text>
<text x="1174.38" y="393" font-size="20" fill="#f2f2f2" font-family='"Liberation Sans", sans-serif' font-weight="normal" font-style="normal" text-anchor="middle">12</text>
<text x="1231.12" y="393" font-size="20" fill="#f2f2f2" font-family='"Liberation Sans", sans-serif' font-weight="normal" font-style="normal" text-anchor="middle">13</text>
<text x="1287.8600000000001" y="393" font-size="20" fill="#f2f2f2" font-family='"Liberation Sans", sans-serif' font-weight="normal" font-style="normal" text-anchor="middle">14</text>
<text x="1344.6" y="393" font-size="20" fill="#f2f2f2" font-family='"Liberation Sans", sans-serif' font-weight="normal" font-style="normal" text-anchor="middle">15</text>
<text x="1401.3400000000001" y="393" font-size="20" fill="#f2f2f2" font-family='"Liberation Sans", sans-serif' font-weight="normal" font-style="normal" text-anchor="middle">16</text>
<text x="1514.8200000000002" y="393" font-size="20" fill="#f2f2f2" font-family='"Liberation Sans", sans-serif' font-weight="normal" font-style="normal" text-anchor="middle">18</text>
<rect x="563.62" y="404" width="1.5" height="6" fill="#8c8c8c" />
<rect x="634.49" y="404" width="1.5" height="6" fill="#8c8c8c" />
<rect x="705.36" y="404" width="1.5" height="6" fill="#8c8c8c" />
<rect x="776.23" y="404" width="1.5" height="6" fill="#8c8c8c" />
<rect x="847.1" y="404" width="1.5" height="6" fill="#8c8c8c" />
<rect x="917.97" y="404" width="1.5" height="6" fill="#8c8c8c" />
<rect x="988.84" y="404" width="1.5" height="6" fill="#8c8c8c" />
<rect x="1059.71" y="404" width="1.5" height="6" fill="#8c8c8c" />
<rect x="1130.58" y="404" width="1.5" height="6" fill="#8c8c8c" />
<rect x="1201.45" y="404" width="1.5" height="6" fill="#8c8c8c" />
<rect x="1272.3200000000002" y="404" width="1.5" height="6" fill="#8c8c8c" />
<rect x="1343.19" y="404" width="1.5" height="6" fill="#8c8c8c" />
<rect x="1414.06" y="404" width="1.5" height="6" fill="#8c8c8c" />
<path d="M485.5 368.5H502.5V377L494 386L502.5 395V415.5H485.5V395L494 386L485.5 377Z" fill="#d4d4d4" stroke="#7a7a7a" stroke-width="1.5" />
<rect x="485.5" y="402.5" width="17" height="1.5" fill="#7a7a7a" />
<rect x="1457.5" y="370" width="1.5" height="19" fill="#ffffff" />
<path d="M1448.5 402.5V394L1458 387.5L1467.5 394V402.5Z" fill="#d4d4d4" stroke="#7a7a7a" stroke-width="1.5" />
<rect x="34" y="444" width="32" height="478" fill="#808080" />
<rect x="34" y="444" width="32" height="114" fill="#5f5f5f" />
<rect x="34" y="557" width="32" height="2" fill="#ffffff" />
<rect x="44" y="471.39" width="12.5" height="2" fill="#ffffff" />
<rect x="44" y="528.13" width="12.5" height="2" fill="#ffffff" />
<rect x="44" y="584.87" width="12.5" height="2" fill="#ffffff" />
<rect x="44" y="641.61" width="12.5" height="2" fill="#ffffff" />
<rect x="44" y="698.35" width="12.5" height="2" fill="#ffffff" />
<rect x="44" y="755.09" width="12.5" height="2" fill="#ffffff" />
<rect x="44" y="811.83" width="12.5" height="2" fill="#ffffff" />
<rect x="44" y="868.5699999999999" width="12.5" height="2" fill="#ffffff" />
<text x="50" y="509.26" font-size="20" fill="#f2f2f2" font-family='"Liberation Sans", sans-serif' font-weight="normal" font-style="normal" text-anchor="middle">1</text>
<text x="50" y="622.74" font-size="20" fill="#f2f2f2" font-family='"Liberation Sans", sans-serif' font-weight="normal" font-style="normal" text-anchor="middle">1</text>
<text x="50" y="679.48" font-size="20" fill="#f2f2f2" font-family='"Liberation Sans", sans-serif' font-weight="normal" font-style="normal" text-anchor="middle">2</text>
<text x="50" y="736.22" font-size="20" fill="#f2f2f2" font-family='"Liberation Sans", sans-serif' font-weight="normal" font-style="normal" text-anchor="middle">3</text>
<text x="50" y="792.96" font-size="20" fill="#f2f2f2" font-family='"Liberation Sans", sans-serif' font-weight="normal" font-style="normal" text-anchor="middle">4</text>
<text x="50" y="849.7" font-size="20" fill="#f2f2f2" font-family='"Liberation Sans", sans-serif' font-weight="normal" font-style="normal" text-anchor="middle">5</text>
<text x="50" y="906.44" font-size="20" fill="#f2f2f2" font-family='"Liberation Sans", sans-serif' font-weight="normal" font-style="normal" text-anchor="middle">6</text>
<rect x="380" y="444" width="1191" height="478" fill="#ffffff" />
<line x1="492.5" y1="444" x2="492.5" y2="922" stroke="#8a8a8a" stroke-width="1" stroke-dasharray="1 1"/>
<line x1="1457.5" y1="444" x2="1457.5" y2="922" stroke="#8a8a8a" stroke-width="1" stroke-dasharray="1 1"/>
<line x1="380" y1="556.5" x2="1571" y2="556.5" stroke="#8a8a8a" stroke-width="1" stroke-dasharray="1 1"/>
<path d="M4.2 617H16.2L18.0 619V688.5L16.2 690.7H4.2L2.2 688.5V619Z" fill="#333333" stroke="none" stroke-width="1" />
<path d="M5.7 619H14.7L16.0 620.5V687L14.7 688.7H5.7L4.2 687V620.5Z" fill="#454745" stroke="none" stroke-width="1" />
<path d="M1904 617H1916L1917.8 619V688.5L1916 690.7H1904L1902 688.5V619Z" fill="#333333" stroke="none" stroke-width="1" />
<path d="M1905.5 619H1914.5L1915.8 620.5V687L1914.5 688.7H1905.5L1904 687V620.5Z" fill="#454745" stroke="none" stroke-width="1" />
<path d="M6.9 648.5L13.2 654.5L6.9 660.4Z" fill="#ffffff" stroke="none" stroke-width="1" />
<path d="M1913.2 648.5L1906.8 654.5L1913.2 660.4Z" fill="#ffffff" stroke="none" stroke-width="1" />
<rect x="1870" y="357" width="30" height="473" fill="#515151" />
<rect x="1870" y="386" width="30" height="119" fill="#9a9a9a" />
<path d="M1877.8 371.5L1885 364.7L1892.3 371.5V376L1885 369.2L1877.8 376Z" fill="#d8d8d8" stroke="none" stroke-width="1" />
<path d="M1877.8 814.5L1885 821.3L1892.3 814.5V810L1885 816.8L1877.8 810Z" fill="#c8c8c8" stroke="none" stroke-width="1" />
<rect x="1870" y="830" width="30" height="92" fill="#1e1e1e" />
<rect x="1872" y="832" width="26" height="26" fill="#454545" />
<rect x="1872" y="860" width="26" height="30" fill="#454545" />
<rect x="1872" y="892" width="26" height="28" fill="#454545" />
<path d="M1877 845L1884 838.5L1891 845Z" fill="#ffffff" stroke="none" stroke-width="1" />
<path d="M1877 851L1884 844.5L1891 851Z" fill="#ffffff" stroke="none" stroke-width="1" />
<rect x="1877" y="850" width="14" height="1.5" fill="#ffffff" />
<circle cx="1882.5" cy="872.5" r="4.5" fill="#ff5050"/>
<path d="M1877 898H1891L1884 904.5Z" fill="#ffffff" stroke="none" stroke-width="1" />
<path d="M1877 904H1891L1884 910.5Z" fill="#ffffff" stroke="none" stroke-width="1" />
<rect x="1877" y="897" width="14" height="1.5" fill="#ffffff" />
<rect x="0" y="922" width="20" height="30" fill="#4a4a4a" />
<rect x="20" y="922" width="30" height="30" fill="#9a9a9a" />
<path d="M40 930H36L29 937L36 944H40L33 937Z" fill="#aaaaaa" stroke="none" stroke-width="1" />
<rect x="1840" y="922" width="30" height="30" fill="#9a9a9a" />
<path d="M1850 930H1854L1861 937L1854 944H1850L1857 937Z" fill="#aaaaaa" stroke="none" stroke-width="1" />
<rect x="1870" y="922" width="30" height="30" fill="#404040" />
<rect x="218.75" y="962" width="1.5" height="35" fill="#6e6e6e" />
<rect x="372.25" y="962" width="1.5" height="35" fill="#6e6e6e" />
<rect x="506.25" y="962" width="1.5" height="35" fill="#6e6e6e" />
<rect x="631.25" y="962" width="1.5" height="35" fill="#6e6e6e" />
<rect x="808.75" y="962" width="1.5" height="35" fill="#6e6e6e" />
<rect x="970.25" y="962" width="1.5" height="35" fill="#6e6e6e" />
<rect x="1119.25" y="962" width="1.5" height="35" fill="#6e6e6e" />
<rect x="1212.75" y="962" width="1.5" height="35" fill="#6e6e6e" />
<text x="384" y="989" font-size="20.5" fill="#e2e2e2" font-family='"Liberation Sans", sans-serif' font-weight="normal" font-style="normal" text-anchor="start" textLength="69.5" lengthAdjust="spacingAndGlyphs">Sekcja 1</text>
<text x="518.75" y="989" font-size="20.5" fill="#e2e2e2" font-family='"Liberation Sans", sans-serif' font-weight="normal" font-style="normal" text-anchor="start" textLength="88.5" lengthAdjust="spacingAndGlyphs">Rozdział 1</text>
<text x="643.75" y="989" font-size="20.5" fill="#e2e2e2" font-family='"Liberation Sans", sans-serif' font-weight="normal" font-style="normal" text-anchor="start" textLength="102" lengthAdjust="spacingAndGlyphs">Strona 1 z 1</text>
<text x="821.8" y="989" font-size="20.5" fill="#e2e2e2" font-family='"Liberation Sans", sans-serif' font-weight="normal" font-style="normal" text-anchor="start" textLength="49.6" lengthAdjust="spacingAndGlyphs">Polski</text>
<text x="982.3" y="989" font-size="20.5" fill="#e2e2e2" font-family='"Liberation Sans", sans-serif' font-weight="normal" font-style="normal" text-anchor="start" textLength="84" lengthAdjust="spacingAndGlyphs">Wyrazy: 0</text>
<text x="1233" y="989" font-size="20.5" fill="#e2e2e2" font-family='"Liberation Sans", sans-serif' font-weight="normal" font-style="normal" text-anchor="start" textLength="38.6" lengthAdjust="spacingAndGlyphs">WST</text>
<rect x="1293.75" y="956.75" width="46.5" height="46.5" rx="4.5" fill="#5a5a5a" stroke="#a8a8a8" stroke-width="1.5"/>
<rect x="1302.5" y="965.75" width="29" height="28.5" fill="#ffffff" />
<rect x="1306" y="969.0" width="22" height="1.1" fill="#909090" />
<rect x="1306" y="972.03" width="22" height="1.1" fill="#909090" />
<rect x="1306" y="975.06" width="22" height="1.1" fill="#909090" />
<rect x="1306" y="978.09" width="22" height="1.1" fill="#909090" />
<rect x="1306" y="981.12" width="22" height="1.1" fill="#909090" />
<rect x="1306" y="984.15" width="22" height="1.1" fill="#909090" />
<rect x="1306" y="987.18" width="22" height="1.1" fill="#909090" />
<rect x="1306" y="990.21" width="22" height="1.1" fill="#909090" />
<rect x="1355" y="969.0" width="24.5" height="1.3" fill="#ffffff" />
<rect x="1355" y="972.03" width="24.5" height="1.3" fill="#ffffff" />
<rect x="1355" y="975.06" width="24.5" height="1.3" fill="#ffffff" />
<rect x="1355" y="978.09" width="24.5" height="1.3" fill="#ffffff" />
<rect x="1355" y="981.12" width="24.5" height="1.3" fill="#ffffff" />
<rect x="1355" y="984.15" width="24.5" height="1.3" fill="#ffffff" />
<rect x="1355" y="987.18" width="24.5" height="1.3" fill="#ffffff" />
<rect x="1355" y="990.21" width="24.5" height="1.3" fill="#ffffff" />
<rect x="1402" y="965" width="30" height="30" fill="#c8c8c8" />
<rect x="1403" y="966" width="28" height="28" fill="#ffffff" />
<rect x="1406" y="969" width="23" height="1.1" fill="#b0b0b0" />
<rect x="1406" y="990" width="23" height="1.1" fill="#b0b0b0" />
<rect x="1455" y="969.0" width="1" height="1.1" fill="#ffffff" />
<rect x="1455" y="972.03" width="1" height="1.1" fill="#ffffff" />
<rect x="1455" y="975.06" width="1" height="1.1" fill="#ffffff" />
<rect x="1455" y="978.09" width="1" height="1.1" fill="#ffffff" />
<rect x="1455" y="981.12" width="1" height="1.1" fill="#ffffff" />
<rect x="1455" y="984.15" width="1" height="1.1" fill="#ffffff" />
<rect x="1455" y="987.18" width="1" height="1.1" fill="#ffffff" />
<rect x="1455" y="990.21" width="1" height="1.1" fill="#ffffff" />
<rect x="1457" y="969.0" width="19" height="1.1" fill="#ffffff" />
<rect x="1454.5" y="969.0" width="1" height="1.1" fill="#ffffff" />
<rect x="1459" y="972.03" width="19" height="1.1" fill="#ffffff" />
<rect x="1456.5" y="972.03" width="1" height="1.1" fill="#ffffff" />
<rect x="1461" y="975.06" width="18" height="1.1" fill="#ffffff" />
<rect x="1458.5" y="975.06" width="1" height="1.1" fill="#ffffff" />
<rect x="1457" y="978.09" width="19" height="1.1" fill="#ffffff" />
<rect x="1454.5" y="978.09" width="1" height="1.1" fill="#ffffff" />
<rect x="1459" y="981.12" width="19" height="1.1" fill="#ffffff" />
<rect x="1456.5" y="981.12" width="1" height="1.1" fill="#ffffff" />
<rect x="1457" y="984.15" width="19" height="1.1" fill="#ffffff" />
<rect x="1454.5" y="984.15" width="1" height="1.1" fill="#ffffff" />
<rect x="1459" y="987.18" width="19" height="1.1" fill="#ffffff" />
<rect x="1456.5" y="987.18" width="1" height="1.1" fill="#ffffff" />
<rect x="1461" y="990.21" width="18" height="1.1" fill="#ffffff" />
<rect x="1458.5" y="990.21" width="1" height="1.1" fill="#ffffff" />
<rect x="1508" y="979.5" width="13" height="1.6" fill="#ffffff" />
<rect x="1537" y="978" width="220" height="2.4" fill="#1c1c1c" />
<rect x="1643" y="966" width="4" height="27.8" fill="#1c1c1c" />
<circle cx="1645" cy="979.5" r="8.8" fill="#ffffff" stroke="#777777" stroke-width="0.8"/>
<path d="M1767.5 981H1781M1774.25 974V988" fill="none" stroke="#ffffff" stroke-width="1.5" />
<text x="1818.2" y="988.4" font-size="20.5" fill="#e6e6e6" font-family='"Liberation Sans", sans-serif' font-weight="normal" font-style="normal" text-anchor="start" textLength="47.5" lengthAdjust="spacingAndGlyphs">100%</text>
<path d="M1883 966.5L1886.5 970.3L1883 974M1887.5 966.5L1891 970.3L1887.5 974" fill="none" stroke="#ffffff" stroke-width="1.3" />
<defs>
<linearGradient id="gstart" x1="0" y1="0" x2="1" y2="1"><stop offset="0" stop-color="#8ee0ff"/><stop offset="1" stop-color="#0fa0f5"/></linearGradient>
<linearGradient id="gtv" x1="0" y1="0" x2="0" y2="1"><stop offset="0" stop-color="#fafafa"/><stop offset="1" stop-color="#d6d6d6"/></linearGradient>
<linearGradient id="gteams" x1="0" y1="0" x2="1" y2="1"><stop offset="0" stop-color="#a56cd0"/><stop offset="1" stop-color="#4a6ad8"/></linearGradient>
<linearGradient id="gfold" x1="0" y1="0" x2="0" y2="1"><stop offset="0" stop-color="#ffd85a"/><stop offset="1" stop-color="#f5b82a"/></linearGradient>
<linearGradient id="gp" x1="0" y1="0" x2="1" y2="1"><stop offset="0" stop-color="#9fd040"/><stop offset="1" stop-color="#5e9a25"/></linearGradient>
<linearGradient id="gbag" x1="0" y1="0" x2="0" y2="1"><stop offset="0" stop-color="#ffffff"/><stop offset="1" stop-color="#dcdcdc"/></linearGradient>
<linearGradient id="gmail" x1="0" y1="0" x2="1" y2="1"><stop offset="0" stop-color="#2aa8e8"/><stop offset="1" stop-color="#0f7ed8"/></linearGradient>
<radialGradient id="gff" cx="0.45" cy="0.4" r="0.6"><stop offset="0" stop-color="#ffbd2e"/><stop offset="0.6" stop-color="#ff7a1a"/><stop offset="1" stop-color="#f0334a"/></radialGradient>
</defs>
<rect x="0" y="1008" width="1920" height="72" fill="#232220" />
<rect x="0" y="1008" width="1920" height="2" fill="#1f1e1c" />
<rect x="27" y="1028.8" width="36" height="32.3" rx="1.5" fill="#0b63c2"/>
<rect x="30" y="1031.4" width="13.6" height="27.2" rx="2" fill="#f6f6f6"/>
<rect x="46.4" y="1031.4" width="13.7" height="14.7" fill="#6bdaff" />
<rect x="46.4" y="1046.1" width="13.7" height="6.1" fill="#1ab0ff" />
<rect x="46.4" y="1052.2" width="13.7" height="6.4" fill="#0584e8" />
<rect x="579.7" y="1028" width="16.8" height="16.8" rx="1.2" fill="url(#gstart)"/>
<rect x="598.2" y="1028" width="16.8" height="16.8" rx="1.2" fill="url(#gstart)"/>
<rect x="579.7" y="1046.5" width="16.8" height="16.8" rx="1.2" fill="url(#gstart)"/>
<rect x="598.2" y="1046.5" width="16.8" height="16.8" rx="1.2" fill="url(#gstart)"/>
<circle cx="666" cy="1042.3" r="12.6" fill="#464646" stroke="#e6e6e6" stroke-width="3"/>
<path d="M657 1051.5L650.5 1058" fill="none" stroke="#e0e0e0" stroke-width="3.6" stroke-linecap="round"/>
<rect x="711.8" y="1037.5" width="27.5" height="24.2" rx="2" fill="#5e5e5e"/>
<rect x="720.8" y="1028" width="27.2" height="25" rx="2" fill="url(#gtv)"/>
<rect x="720.8" y="1037.5" width="18.4" height="15.5" rx="1" fill="#a8a8a8"/>
<circle cx="795.3" cy="1045" r="16.9" fill="url(#gteams)"/>
<path d="M781 1051L778.4 1061.6L790 1058.5Z" fill="#5a5ad0" stroke="none" stroke-width="1" />
<rect x="785.3" y="1037.8" width="14.1" height="14.1" rx="2" fill="#ffffff"/>
<path d="M800.8 1042.5L805 1040V1051L800.8 1048.5Z" fill="#ffffff" stroke="none" stroke-width="1" />
<defs><linearGradient id="gff2" x1="0.1" y1="0.9" x2="0.85" y2="0.1"><stop offset="0" stop-color="#f5206a"/><stop offset="0.35" stop-color="#ff5a2a"/><stop offset="0.65" stop-color="#ffa020"/><stop offset="1" stop-color="#ffe838"/></linearGradient><linearGradient id="gglobe" x1="0" y1="0" x2="0" y2="1"><stop offset="0" stop-color="#c040e8"/><stop offset="1" stop-color="#5038c8"/></linearGradient></defs>
<path d="M844.7 1045Q844.7 1036 851.8 1031.8L853.8 1037L856 1033.2L858.5 1036.8Q862 1035.5 865 1036Q864 1031 866.5 1027Q874.5 1032 877.5 1039Q878.8 1042 878.8 1045A17.05 17.5 0 0 1 844.7 1045Z" fill="url(#gff2)" stroke="none" stroke-width="1" />
<ellipse cx="861.6" cy="1045" rx="6.8" ry="7.6" fill="url(#gglobe)"/>
<path d="M849.5 1041Q855 1038.5 862 1041.5Q858.5 1043.5 855.5 1044Q852 1043.5 849.5 1041Z" fill="#ffb51e" stroke="none" stroke-width="1" />
<path d="M910 1031Q910 1029.2 912 1029.2H923L926 1032H944Q946.2 1032 946.2 1034V1061.2H910Z" fill="#e8a413" stroke="none" stroke-width="1" />
<path d="M910 1034.5H946.2V1059.2Q946.2 1061.2 944.2 1061.2H912Q910 1061.2 910 1059.2Z" fill="url(#gfold)" stroke="none" stroke-width="1" />
<rect x="916" y="1052" width="23.5" height="9.2" rx="2" fill="#1a7ed8"/>
<rect x="920" y="1055" width="15.5" height="1.3" fill="#0b4f9a" />
<rect x="975.8" y="1026.7" width="36.4" height="36.5" fill="#d8f0b8" />
<rect x="977.8" y="1028.7" width="32.4" height="32.5" fill="url(#gp)" />
<text x="986.5" y="1053.7" font-size="22.5" fill="#ffffff" font-family='"Liberation Sans", sans-serif' font-weight="bold" font-style="normal" text-anchor="start" textLength="14.5" lengthAdjust="spacingAndGlyphs">P</text>
<path d="M1050.5 1033V1029.5Q1050.5 1028 1052 1028H1067.5Q1069 1028 1069 1029.5V1033" fill="none" stroke="#35b4ef" stroke-width="2" />
<rect x="1041.7" y="1031.7" width="35.3" height="31.5" rx="4" fill="url(#gbag)"/>
<rect x="1052" y="1040" width="6.8" height="6.8" fill="#f35325" />
<rect x="1059.8" y="1040" width="6.8" height="6.8" fill="#81bc06" />
<rect x="1052" y="1047.8" width="6.8" height="6.8" fill="#05a6f0" />
<rect x="1059.8" y="1047.8" width="6.8" height="6.8" fill="#ffba08" />
<rect x="1096.5" y="1015.5" width="59" height="59.5" rx="5" fill="#2d2d2d" stroke="#353535" stroke-width="1"/>
<rect x="1107.5" y="1026.7" width="36.5" height="36.5" fill="#ffc8c8" />
<rect x="1109.8" y="1029" width="32" height="32" fill="url(#lg)" />
<path d="M1118.3 1035.8H1132.5V1040.8H1128.3V1053.7H1122.5V1040.8H1118.3Z" fill="#ffffff" stroke="none" stroke-width="1" />
<rect x="1114.2" y="1068.7" width="23.8" height="5.3" rx="2.6" fill="#1e9bff"/>
<rect x="1175" y="1027.8" width="33" height="31.2" rx="4.5" fill="#b30b00"/>
<path d="M1182.5 1052Q1190 1040 1192 1034Q1193 1030 1191 1030Q1189 1030 1190 1036Q1193 1045 1202 1048Q1205 1047 1204 1045.5Q1197 1043 1184.5 1049Q1181 1052 1182.5 1052Z" fill="none" stroke="#ffffff" stroke-width="1.5" />
<path d="M1240 1037.5L1258 1027.4L1276 1037.5V1061H1240Z" fill="#0b5fb0" stroke="none" stroke-width="1" />
<path d="M1243 1038.2H1273L1258 1048Z" fill="#f2f2f2" stroke="none" stroke-width="1" />
<path d="M1240 1038.5L1258 1049.5L1276 1038.5V1061H1240Z" fill="url(#gmail)" stroke="none" stroke-width="1" />
<path d="M1258 1049.5L1276 1038.5V1061Z" fill="#3cc6f4" stroke="none" stroke-width="1" />
<rect x="1314" y="1026.8" width="20" height="8" rx="1.5" fill="#45d0ff"/>
<rect x="1314" y="1031" width="20" height="11.8" fill="#35b8f0" />
<rect x="1314" y="1042.8" width="20" height="9.2" fill="#1e9ad8" />
<rect x="1314" y="1052" width="20" height="7" fill="#0a6cc0" />
<rect x="1314" y="1057" width="20" height="5.8" rx="1.5" fill="#0c5aa0"/>
<circle cx="1338" cy="1032" r="12" fill="#1a8fff"/>
<text x="1338" y="1038.5" font-size="16.5" fill="#000000" font-family='"Liberation Sans", sans-serif' font-weight="normal" font-style="normal" text-anchor="middle">4</text>
<path d="M1605.5 1048L1614.5 1038.5L1623.5 1048" fill="none" stroke="#ffffff" stroke-width="1.3" />
<path d="M1650.8 1042.3A15.5 15.5 0 0 1 1673 1042.3" fill="none" stroke="#ffffff" stroke-width="1.9" />
<path d="M1654 1045.2A11 11 0 0 1 1669.8 1045.2" fill="none" stroke="#ffffff" stroke-width="1.9" />
<path d="M1657.2 1048.2A6.6 6.6 0 0 1 1666.6 1048.2" fill="none" stroke="#ffffff" stroke-width="1.9" />
<circle cx="1661.9" cy="1050" r="1.9" fill="#ffffff"/>
<path d="M1687.2 1039.8H1690L1695.8 1036V1052L1690 1047.8H1687.2Z" fill="none" stroke="#ffffff" stroke-width="1.7" stroke-linejoin="round"/>
<path d="M1699 1040Q1701.3 1044 1699 1048M1702.3 1037.2Q1706.5 1044 1702.3 1050.8M1705 1034.5Q1712 1044 1705 1053.5" fill="none" stroke="#ffffff" stroke-width="1.7" />
<path d="M1733 1037.1H1740.5Q1742.8 1037.1 1742.8 1039.4V1048.7Q1742.8 1051 1740.5 1051H1728.5" fill="none" stroke="#ffffff" stroke-width="1.8" />
<rect x="1742.5" y="1041.6" width="3.4" height="4" fill="#ffffff" />
<rect x="1728" y="1039" width="8" height="9.8" fill="#ffffff" />
<path d="M1722 1036.6H1729.7V1040.5Q1729.7 1042.6 1727.6 1042.6H1724.1Q1722 1042.6 1722 1040.5Z" fill="#ffffff" stroke="none" stroke-width="1" />
<rect x="1723" y="1033" width="1.6" height="4" fill="#ffffff" />
<rect x="1727" y="1033" width="1.6" height="4" fill="#ffffff" />
<rect x="1725.1" y="1042" width="1.8" height="10" fill="#ffffff" />
<path d="M1729.7 1037.1V1051" fill="none" stroke="#232220" stroke-width="1.2" />
<text x="1813.5" y="1039" font-size="18" fill="#ffffff" font-family='"Liberation Sans", sans-serif' font-weight="normal" font-style="normal" text-anchor="start" textLength="41" lengthAdjust="spacingAndGlyphs">17:35</text>
<text x="1768.5" y="1062" font-size="18" fill="#ffffff" font-family='"Liberation Sans", sans-serif' font-weight="normal" font-style="normal" text-anchor="start" textLength="85.5" lengthAdjust="spacingAndGlyphs">28.03.2022</text>
<circle cx="1878" cy="1044.2" r="12.2" fill="#1a8cf0"/>
<text x="1878" y="1050.5" font-size="16.5" fill="#101010" font-family='"Liberation Sans", sans-serif' font-weight="normal" font-style="normal" text-anchor="middle">1</text></svg></body></html>
